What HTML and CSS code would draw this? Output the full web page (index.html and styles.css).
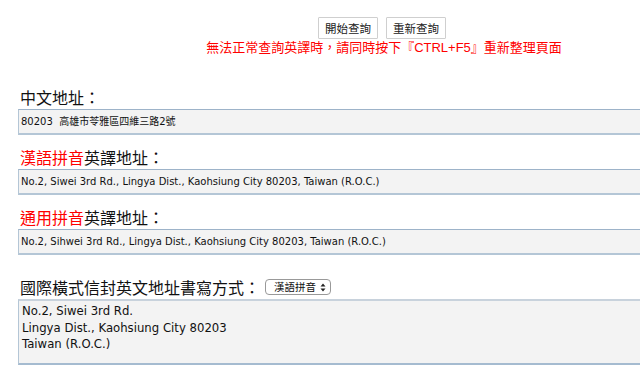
FILE: index.html
```html
<!DOCTYPE html>
<html lang="zh-Hant">
<head>
<meta charset="utf-8">
<link rel="stylesheet" href="styles.css">
</head>
<body>
<div class="page">
  <div class="top">
    <div class="buttons">
      <button class="btn">開始查詢</button>
      <button class="btn">重新查詢</button>
    </div>
    <div class="warn">無法正常查詢英譯時，請同時按下『CTRL+F5』重新整理頁面</div>
  </div>
  <div class="field">
    <div class="label">中文地址：</div>
    <div class="box">80203&nbsp; 高雄市苓雅區四維三路2號</div>
  </div>
  <div class="field">
    <div class="label"><span class="red">漢語拼音</span>英譯地址：</div>
    <div class="box">No.2, Siwei 3rd Rd., Lingya Dist., Kaohsiung City 80203, Taiwan (R.O.C.)</div>
  </div>
  <div class="field">
    <div class="label"><span class="red">通用拼音</span>英譯地址：</div>
    <div class="box">No.2, Sihwei 3rd Rd., Lingya Dist., Kaohsiung City 80203, Taiwan (R.O.C.)</div>
  </div>
  <div class="field last">
    <div class="label">國際橫式信封英文地址書寫方式：<span class="select">漢語拼音<svg class="arrows" width="6" height="9" viewBox="0 0 6 9"><path d="M0.5 3.5 L3 0.5 L5.5 3.5 Z M0.5 5.5 L3 8.5 L5.5 5.5 Z" fill="#222"/></svg></span></div>
    <div class="area">No.2, Siwei 3rd Rd.<br>Lingya Dist., Kaohsiung City 80203<br>Taiwan (R.O.C.)</div>
  </div>
</div>
</body>
</html>
```
FILE: styles.css
```css
html, body {
  margin: 0;
  padding: 0;
  background: #fff;
  overflow: hidden;
}
.page {
  width: 640px;
  font-family: "DejaVu Sans", "Noto Sans CJK TC", sans-serif;
  color: #111;
}
.top {
  display: flex;
  flex-direction: column;
  align-items: center;
  padding-top: 17px;
  padding-left: 128px;
}
.buttons {
  display: flex;
  gap: 8px;
  padding-right: 4px;
}
.btn {
  height: 22px;
  padding: 0 6px;
  background: #fff;
  border: 1px solid #cfcfcf;
  font-family: "Noto Sans CJK TC", sans-serif;
  font-size: 11.5px;
  color: #222;
  border-radius: 1px;
}
.warn {
  margin-top: 1px;
  color: #f00;
  font-family: "Liberation Sans", "Noto Sans CJK TC", sans-serif;
  font-size: 13px;
  line-height: 16px;
}
.field {
  padding-left: 18px;
  margin-top: 31px;
}
.field + .field {
  margin-top: 12px;
}
.field.last {
  margin-top: 22px;
}
.label {
  font-family: "Noto Sans CJK TC", sans-serif;
  font-size: 16px;
  line-height: 20px;
  padding-left: 2px;
  display: flex;
  align-items: center;
}
.red { color: #f00; }
.box {
  margin-top: 2px;
  width: 700px;
  height: 26px;
  box-sizing: border-box;
  background: #f3f3f3;
  border-top: 1px solid #9db3c9;
  border-bottom: 2px solid #b4c6d6;
  border-left: 1px solid #b4c6d6;
  font-family: "DejaVu Sans", "Noto Sans CJK TC", sans-serif;
  font-size: 10px;
  line-height: 23px;
  padding-left: 2px;
}
.area {
  margin-top: 2px;
  width: 700px;
  height: 66px;
  box-sizing: border-box;
  background: #f3f3f3;
  border-top: 2px solid #c8d2dc;
  border-bottom: 2px solid #a5bbd0;
  border-left: 1px solid #b4c6d6;
  font-family: "DejaVu Sans", sans-serif;
  font-size: 11.7px;
  line-height: 16.5px;
  padding: 2px 0 0 3px;
}
.select {
  display: inline-flex;
  align-items: center;
  gap: 4px;
  margin-left: 5px;
  height: 14px;
  padding: 0 4px 0 8px;
  border: 1px solid #999;
  border-radius: 4px;
  font-size: 10.5px;
  line-height: 14px;
}
```
